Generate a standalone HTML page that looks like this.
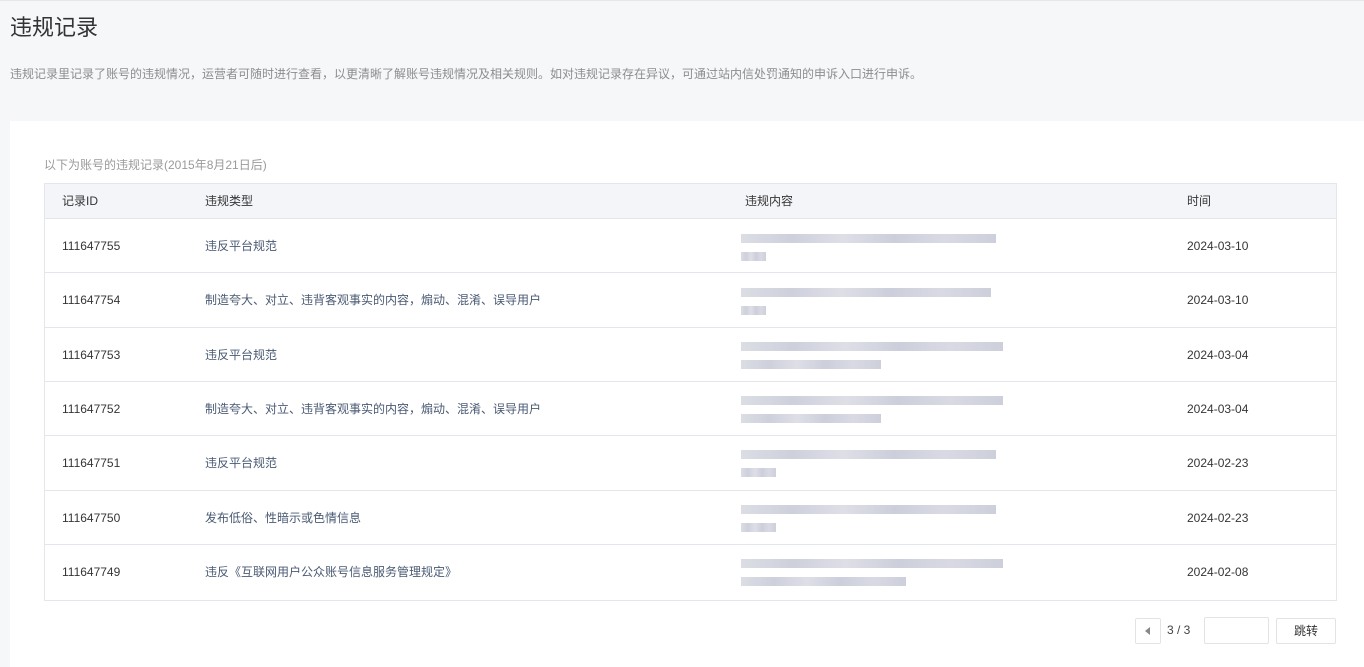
<!DOCTYPE html>
<html><head><meta charset="utf-8"><style>
body{margin:0;width:1364px;height:667px;overflow:hidden;background:#f6f7f9;font-family:"Liberation Sans","Noto Sans CJK SC",sans-serif;color:#353535;}
.top{position:absolute;left:0;top:0;width:1364px;height:1px;background:#e6e7ea}
h1{position:absolute;left:10px;top:10px;margin:0;font-size:22px;font-weight:normal;color:#333}
.desc{position:absolute;left:10px;top:65px;font-size:12px;color:#8d8d8d}
.panel{position:absolute;left:10px;top:121px;width:1354px;height:546px;background:#fff}
.sub{position:absolute;left:44px;top:156px;font-size:12px;color:#9a9a9a}
.tbl{position:absolute;left:44px;top:183px;width:1291px;height:416px;border:1px solid #e4e6eb}
.hd{position:absolute;left:0;top:0;width:1291px;height:34px;background:#f4f5f9;border-bottom:1px solid #e4e6eb}
.c{position:absolute;font-size:12px;line-height:16px;color:#353535}
.row{position:absolute;left:0;width:1291px;border-bottom:1px solid #e4e6eb}
.blur{position:absolute;left:696px;height:9px;background:linear-gradient(90deg,#d3d5de,#c1c4d3 20%,#d6d6e0 40%,#bfc3d2 60%,#cfd0dc 80%,#c0c3d2);opacity:.8}
.type{color:#4a5a73}
.pg{position:absolute;font-size:12px}
.box{position:absolute;border:1px solid #e3e3e3;border-radius:2px;background:#fff}
</style></head><body>
<div class="top"></div>
<h1>违规记录</h1>
<div class="desc">违规记录里记录了账号的违规情况，运营者可随时进行查看，以更清晰了解账号违规情况及相关规则。如对违规记录存在异议，可通过站内信处罚通知的申诉入口进行申诉。</div>
<div class="panel"></div>
<div class="sub">以下为账号的违规记录(2015年8月21日后)</div>
<div class="tbl">
<div class="hd">
<div class="c" style="left:17px;top:9px">记录ID</div>
<div class="c" style="left:160px;top:9px">违规类型</div>
<div class="c" style="left:700px;top:9px">违规内容</div>
<div class="c" style="left:1142px;top:9px">时间</div>
</div>
<div class="row" style="top:35px;height:53px">
<div class="c" style="left:17px;top:19px">111647755</div><div class="c type" style="left:160px;top:19px">违反平台规范</div>
<div class="blur" style="top:15px;width:255px"></div><div class="blur" style="top:33px;width:25px"></div>
<div class="c" style="left:1142px;top:19px">2024-03-10</div></div>
<div class="row" style="top:89px;height:54px">
<div class="c" style="left:17px;top:19px">111647754</div><div class="c type" style="left:160px;top:19px">制造夸大、对立、违背客观事实的内容，煽动、混淆、误导用户</div>
<div class="blur" style="top:15px;width:250px"></div><div class="blur" style="top:33px;width:25px"></div>
<div class="c" style="left:1142px;top:19px">2024-03-10</div></div>
<div class="row" style="top:144px;height:53px">
<div class="c" style="left:17px;top:19px">111647753</div><div class="c type" style="left:160px;top:19px">违反平台规范</div>
<div class="blur" style="top:14px;width:262px"></div><div class="blur" style="top:32px;width:140px"></div>
<div class="c" style="left:1142px;top:19px">2024-03-04</div></div>
<div class="row" style="top:198px;height:53px">
<div class="c" style="left:17px;top:19px">111647752</div><div class="c type" style="left:160px;top:19px">制造夸大、对立、违背客观事实的内容，煽动、混淆、误导用户</div>
<div class="blur" style="top:14px;width:262px"></div><div class="blur" style="top:32px;width:140px"></div>
<div class="c" style="left:1142px;top:19px">2024-03-04</div></div>
<div class="row" style="top:252px;height:54px">
<div class="c" style="left:17px;top:19px">111647751</div><div class="c type" style="left:160px;top:19px">违反平台规范</div>
<div class="blur" style="top:14px;width:255px"></div><div class="blur" style="top:32px;width:35px"></div>
<div class="c" style="left:1142px;top:19px">2024-02-23</div></div>
<div class="row" style="top:307px;height:53px">
<div class="c" style="left:17px;top:19px">111647750</div><div class="c type" style="left:160px;top:19px">发布低俗、性暗示或色情信息</div>
<div class="blur" style="top:14px;width:255px"></div><div class="blur" style="top:32px;width:35px"></div>
<div class="c" style="left:1142px;top:19px">2024-02-23</div></div>
<div class="row" style="top:361px;height:54px;border-bottom:none">
<div class="c" style="left:17px;top:19px">111647749</div><div class="c type" style="left:160px;top:19px">违反《互联网用户公众账号信息服务管理规定》</div>
<div class="blur" style="top:14px;width:262px"></div><div class="blur" style="top:32px;width:165px"></div>
<div class="c" style="left:1142px;top:19px">2024-02-08</div></div>
</div>
<div class="box" style="left:1135px;top:618px;width:24px;height:24px"><div style="position:absolute;left:9px;top:8px;width:0;height:0;border-top:4px solid transparent;border-bottom:4px solid transparent;border-right:5px solid #888"></div></div>
<div class="pg" style="left:1167px;top:623px;color:#444">3 / 3</div>
<div class="box" style="left:1204px;top:617px;width:63px;height:25px"></div>
<div class="box" style="left:1276px;top:618px;width:58px;height:24px;text-align:center;line-height:24px;font-size:12px;color:#333">跳转</div>
</body></html>
